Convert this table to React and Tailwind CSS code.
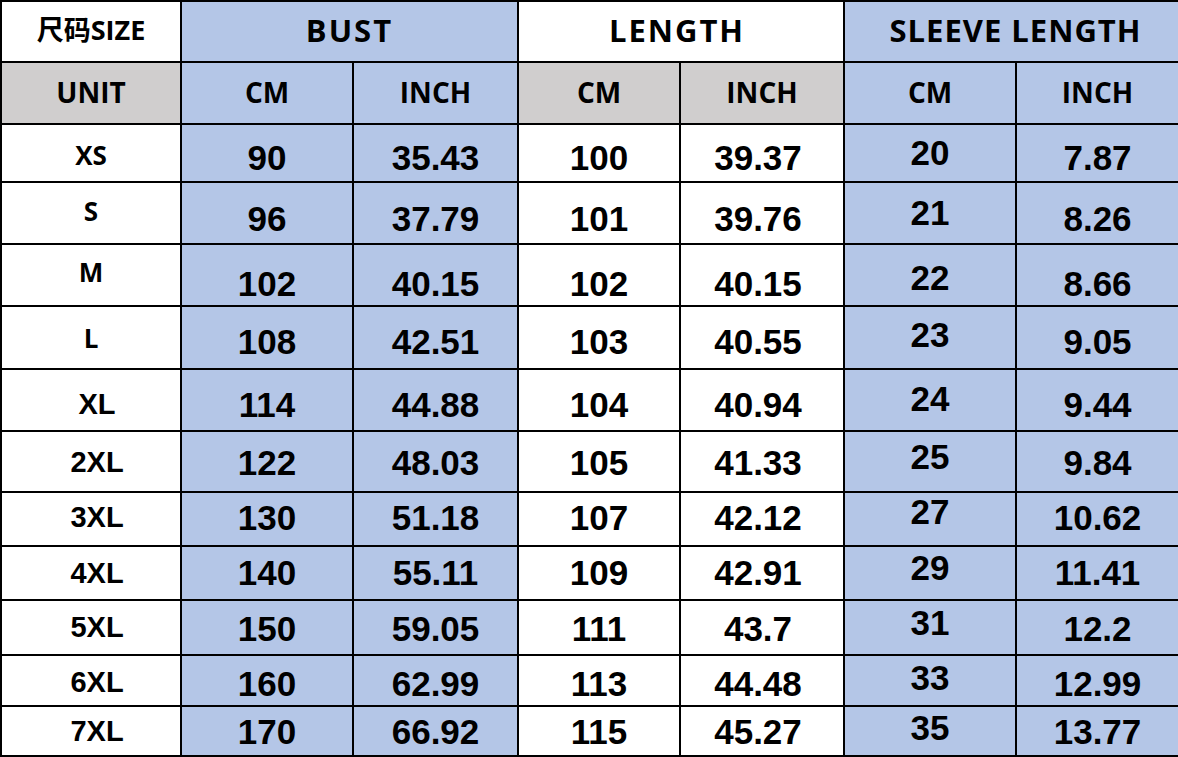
import React from "react";

const rows = [
  { s: "XS", d: ["90", "35.43", "100", "39.37", "20", "7.87"], lab: "os", lp: "pt-[4px]", dp: "pt-[8px]", sp: "pb-[2px]" },
  { s: "S", d: ["96", "37.79", "101", "39.76", "21", "8.26"], lab: "os", lp: "pb-[4px]", dp: "pt-[10px]", sp: "pb-[2px]" },
  { s: "M", d: ["102", "40.15", "102", "40.15", "22", "8.66"], lab: "os", lp: "pb-[6px]", dp: "pt-[16px]", sp: "pt-[4px]" },
  { s: "L", d: ["108", "42.51", "103", "40.55", "23", "9.05"], lab: "os", lp: "", dp: "pt-[8px]", sp: "pb-[6px]" },
  { s: "XL", d: ["114", "44.88", "104", "40.94", "24", "9.44"], lab: "ar", lp: "pt-[8px]", dp: "pt-[8px]", sp: "pb-[4px]" },
  { s: "2XL", d: ["122", "48.03", "105", "41.33", "25", "9.84"], lab: "ar", lp: "pt-[2px]", dp: "pt-[2px]", sp: "pb-[10px]" },
  { s: "3XL", d: ["130", "51.18", "107", "42.12", "27", "10.62"], lab: "ar", lp: "pb-[4px]", dp: "pb-[4px]", sp: "pb-[16px]" },
  { s: "4XL", d: ["140", "55.11", "109", "42.91", "29", "11.41"], lab: "ar", lp: "", dp: "pb-[2px]", sp: "pb-[12px]" },
  { s: "5XL", d: ["150", "59.05", "111", "43.7", "31", "12.2"], lab: "ar", lp: "", dp: "pt-[2px]", sp: "pb-[10px]" },
  { s: "6XL", d: ["160", "62.99", "113", "44.48", "33", "12.99"], lab: "ar", lp: "pt-[4px]", dp: "pt-[6px]", sp: "pb-[6px]" },
  { s: "7XL", d: ["170", "66.92", "115", "45.27", "35", "13.77"], lab: "ar", lp: "", dp: "", sp: "pb-[8px]" },
];

const BLUE = "bg-[#b4c6e7]";
const GRAY = "bg-[#d0cece]";
const WHITE = "bg-white";
const OS = "font-['Open_Sans','Noto_Sans_CJK_SC',sans-serif] font-bold";
const AR = "font-['Liberation_Sans',Arial,sans-serif] font-bold";

function Cell({ bg, className = "", children }) {
  return (
    <div className={`flex items-center justify-center leading-none text-black ${bg} ${className}`}>
      {children}
    </div>
  );
}

export default function App() {
  return (
    <div className="w-[1178px] h-[757px] overflow-hidden bg-black">
      <div className="grid grid-cols-[178px_170px_163px_160px_162px_170px_161px] grid-rows-[59px_60px_56px_60px_60px_61px_60px_59px_52px_52px_53px_49px_48px] gap-[2px] pt-[2px] pl-[2px] pb-[2px]">
        <Cell bg={WHITE} className={`${OS} text-[27px] pb-[4px]`}>尺码SIZE</Cell>
        <Cell bg={BLUE} className={`${OS} col-span-2 text-[31px] tracking-[2px] pb-[2px]`}>BUST</Cell>
        <Cell bg={WHITE} className={`${OS} col-span-2 text-[31px] tracking-[2px] pb-[2px] pr-[8px]`}>LENGTH</Cell>
        <Cell bg={BLUE} className={`${OS} col-span-2 text-[31px] tracking-[1px] pb-[2px] pl-[8px]`}>SLEEVE LENGTH</Cell>

        <Cell bg={GRAY} className={`${OS} text-[28px] pb-[2px]`}>UNIT</Cell>
        <Cell bg={BLUE} className={`${OS} text-[28px] pb-[2px]`}>CM</Cell>
        <Cell bg={BLUE} className={`${OS} text-[28px] pb-[2px]`}>INCH</Cell>
        <Cell bg={GRAY} className={`${OS} text-[28px] pb-[2px]`}>CM</Cell>
        <Cell bg={GRAY} className={`${OS} text-[28px] pb-[2px]`}>INCH</Cell>
        <Cell bg={BLUE} className={`${OS} text-[28px] pb-[2px]`}>CM</Cell>
        <Cell bg={BLUE} className={`${OS} text-[28px] pb-[2px]`}>INCH</Cell>

        {rows.map((r) => (
          <React.Fragment key={r.s}>
            <Cell
              bg={WHITE}
              className={`${r.lab === "os" ? `${OS} text-[26px]` : `${AR} text-[29px] pl-[12px]`} ${r.lp}`}
            >
              {r.s}
            </Cell>
            <Cell bg={BLUE} className={`${AR} text-[35px] ${r.dp}`}>{r.d[0]}</Cell>
            <Cell bg={BLUE} className={`${AR} text-[35px] ${r.dp}`}>{r.d[1]}</Cell>
            <Cell bg={WHITE} className={`${AR} text-[35px] ${r.dp}`}>{r.d[2]}</Cell>
            <Cell bg={WHITE} className={`${AR} text-[35px] ${r.dp} pr-[8px]`}>{r.d[3]}</Cell>
            <Cell bg={BLUE} className={`${AR} text-[35px] ${r.sp}`}>{r.d[4]}</Cell>
            <Cell bg={BLUE} className={`${AR} text-[35px] ${r.dp}`}>{r.d[5]}</Cell>
          </React.Fragment>
        ))}
      </div>
    </div>
  );
}
